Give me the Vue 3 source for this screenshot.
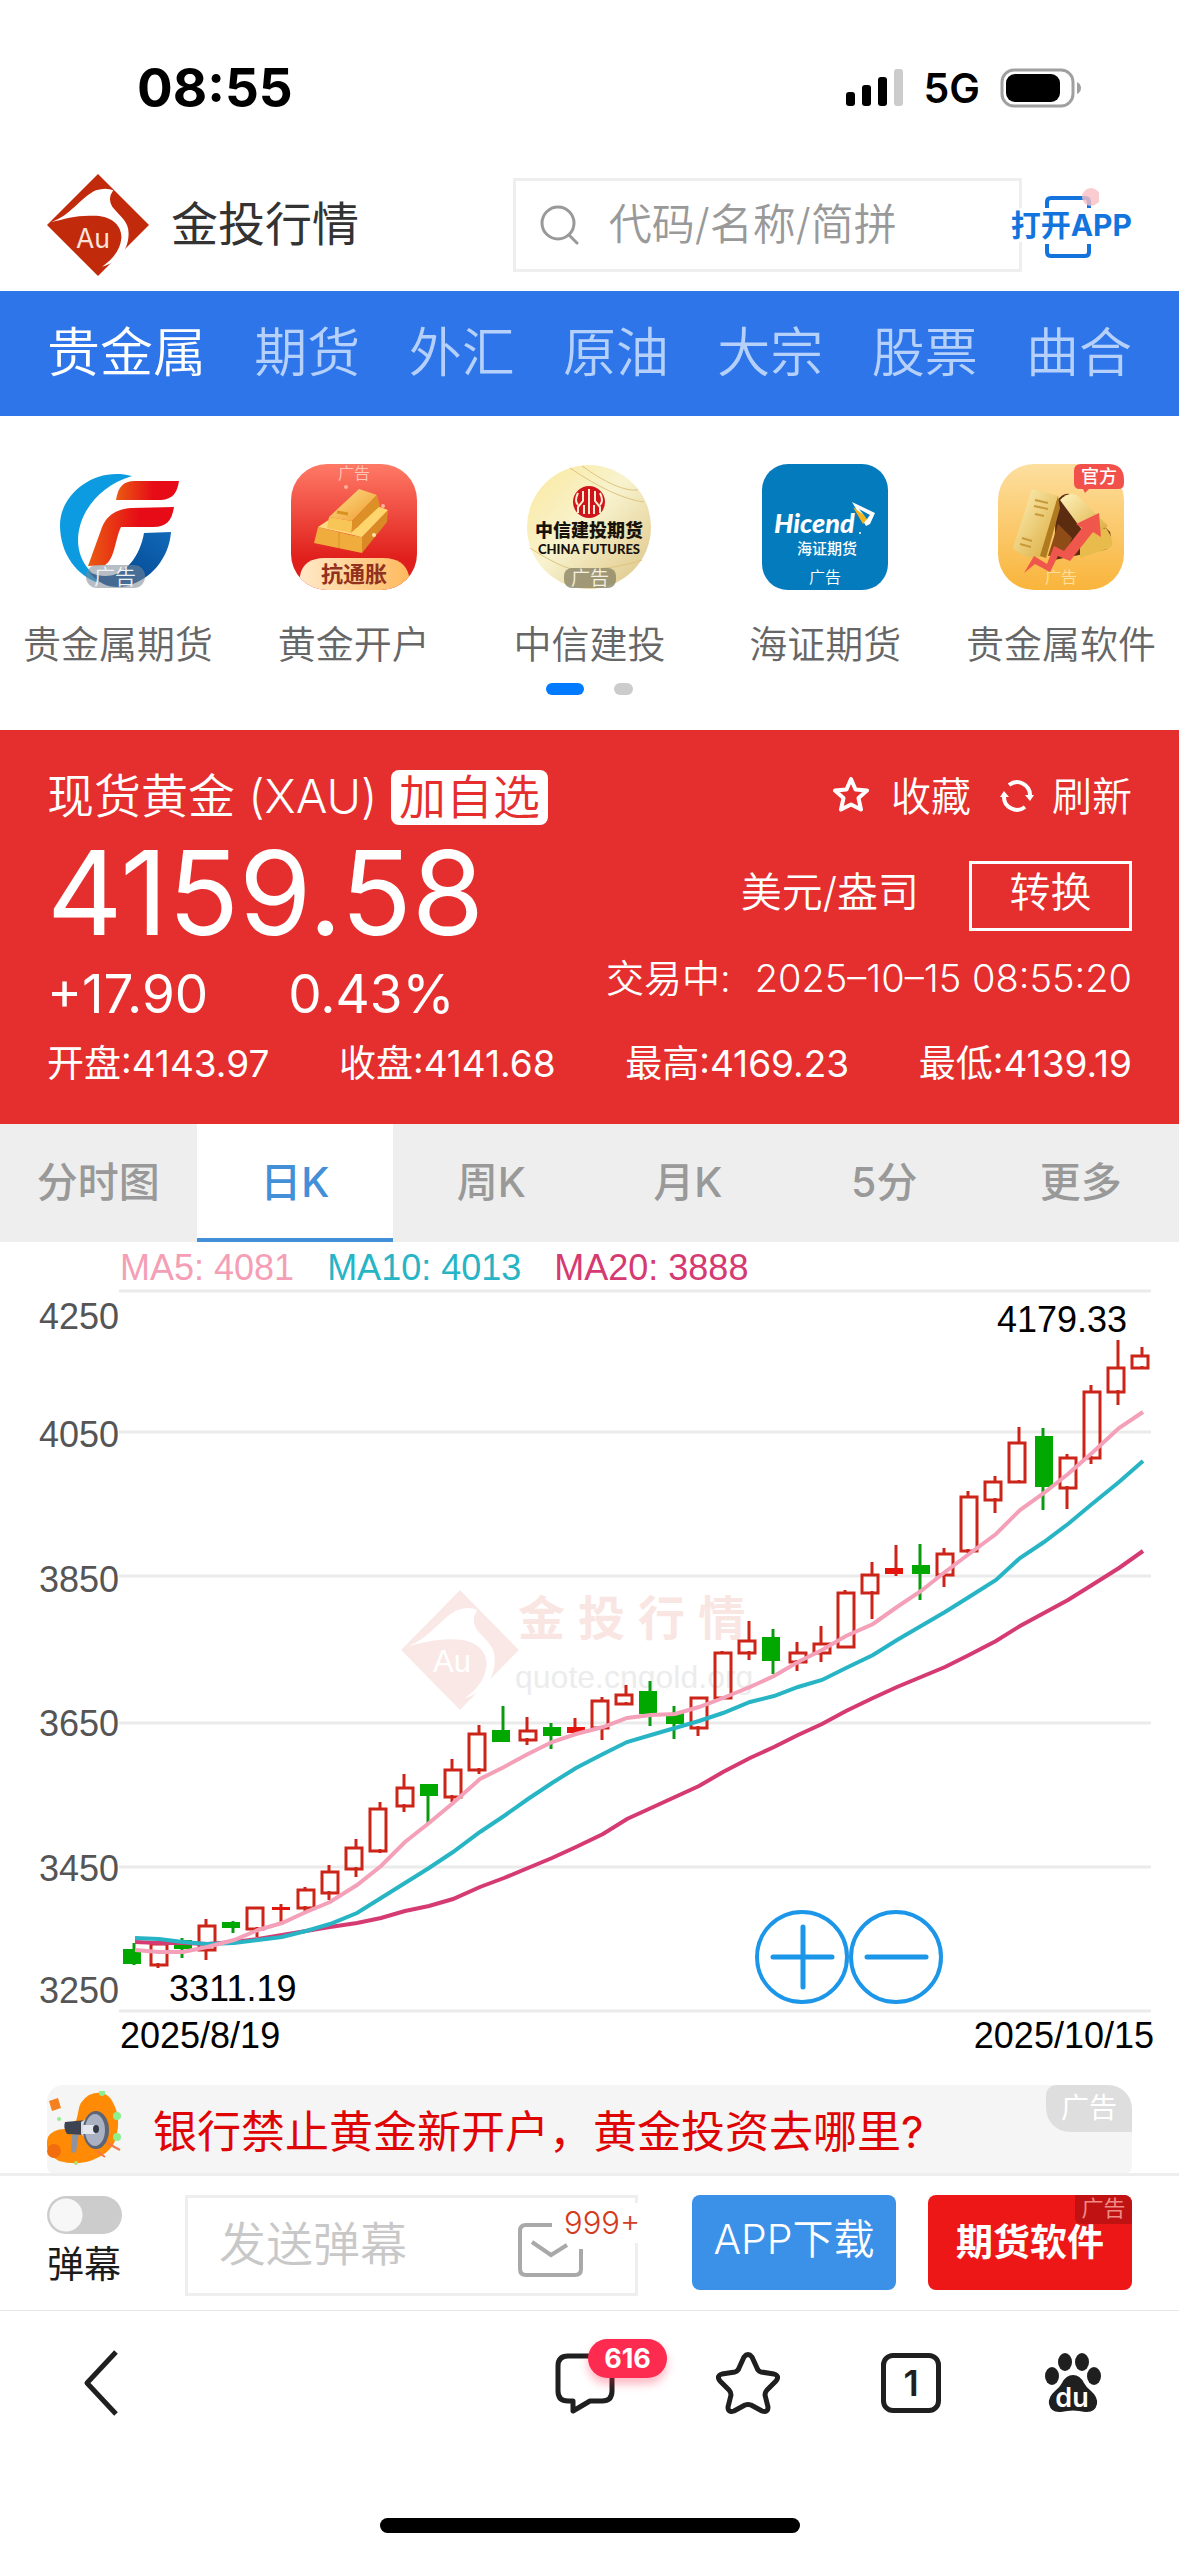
<script setup>
import { ref } from 'vue'

const navItems = ['贵金属', '期货', '外汇', '原油', '大宗', '股票', '曲合']
const periods = ['分时图', '日K', '周K', '月K', '5分', '更多']
const activePeriod = ref('日K')
const danmu = ref(false)

const stats = [
  { label: '开盘', value: '4143.97' },
  { label: '收盘', value: '4141.68' },
  { label: '最高', value: '4169.23' },
  { label: '最低', value: '4139.19' }
]

const legend = [
  { key: 'ma5', text: 'MA5: 4081' },
  { key: 'ma10', text: 'MA10: 4013' },
  { key: 'ma20', text: 'MA20: 3888' }
]

// y of each grid line, its label and the label's baseline
const grid = [
  { y: 1291, label: '4250', base: 1329 },
  { y: 1432, label: '4050', base: 1447 },
  { y: 1576, label: '3850', base: 1592 },
  { y: 1723, label: '3650', base: 1736 },
  { y: 1867, label: '3450', base: 1881 },
  { y: 2011, label: '3250', base: 2003 }
]

// body x, wick x, high, body top, body bottom, low, rising
const candles = [
  [123, 134, 1943, 1949, 1964, 1965, 0],
  [150, 158, 1943, 1943, 1964, 1968, 1],
  [174, 182, 1938, 1940, 1949, 1958, 0],
  [198, 206, 1919, 1925, 1949, 1960, 1],
  [222, 233, 1921, 1922, 1928, 1933, 0],
  [246, 257, 1907, 1907, 1928, 1937, 1],
  [272, 281, 1904, 1907, 1910, 1923, 1],
  [297, 305, 1887, 1889, 1907, 1914, 1],
  [321, 329, 1865, 1871, 1892, 1900, 1],
  [345, 356, 1839, 1847, 1868, 1877, 1],
  [369, 380, 1802, 1808, 1850, 1853, 1],
  [396, 404, 1774, 1787, 1805, 1812, 1],
  [420, 428, 1784, 1784, 1796, 1823, 0],
  [444, 452, 1759, 1769, 1796, 1802, 1],
  [468, 479, 1725, 1733, 1769, 1774, 1],
  [492, 503, 1706, 1730, 1742, 1742, 0],
  [519, 527, 1717, 1730, 1739, 1745, 1],
  [543, 551, 1723, 1727, 1736, 1749, 0],
  [567, 575, 1718, 1727, 1733, 1736, 1],
  [591, 602, 1697, 1700, 1727, 1740, 1],
  [615, 626, 1685, 1694, 1703, 1705, 1],
  [639, 650, 1681, 1691, 1714, 1726, 0],
  [666, 674, 1706, 1713, 1724, 1739, 0],
  [690, 698, 1697, 1697, 1727, 1736, 1],
  [714, 722, 1651, 1652, 1697, 1697, 1],
  [738, 749, 1621, 1640, 1652, 1660, 1],
  [762, 773, 1629, 1637, 1661, 1674, 0],
  [789, 797, 1642, 1652, 1661, 1671, 1],
  [813, 821, 1626, 1643, 1652, 1662, 1],
  [837, 845, 1590, 1592, 1646, 1646, 1],
  [861, 872, 1562, 1574, 1592, 1619, 1],
  [885, 896, 1545, 1568, 1574, 1576, 1],
  [912, 920, 1544, 1565, 1574, 1600, 0],
  [936, 944, 1548, 1553, 1574, 1587, 1],
  [960, 968, 1491, 1496, 1550, 1553, 1],
  [984, 995, 1476, 1481, 1499, 1513, 1],
  [1008, 1019, 1427, 1442, 1481, 1483, 1],
  [1035, 1043, 1428, 1436, 1487, 1510, 0],
  [1059, 1067, 1454, 1457, 1487, 1509, 1],
  [1083, 1091, 1385, 1391, 1457, 1464, 1],
  [1107, 1118, 1340, 1367, 1391, 1405, 1],
  [1131, 1142, 1347, 1355, 1367, 1369, 1]
].map(([x, wx, high, top, bottom, low, up]) => ({ x, wx, high, top, bottom, low, up: !!up }))

const averages = [
  {
    key: 'ma20',
    ys: [1942, 1943, 1943, 1944, 1942, 1939, 1935, 1931, 1927, 1923, 1918, 1911, 1906, 1899, 1887, 1878, 1868, 1858, 1847, 1834, 1819, 1808, 1797, 1786, 1772, 1758, 1747, 1735, 1724, 1711, 1698, 1687, 1677, 1667, 1655, 1641, 1626, 1613, 1600, 1585, 1568, 1551]
  },
  {
    key: 'ma10',
    ys: [1938, 1939, 1942, 1944, 1943, 1940, 1937, 1931, 1924, 1913, 1898, 1883, 1868, 1852, 1832, 1816, 1799, 1783, 1768, 1754, 1742, 1735, 1728, 1721, 1713, 1702, 1696, 1687, 1680, 1668, 1655, 1640, 1626, 1612, 1597, 1580, 1558, 1542, 1524, 1504, 1482, 1461]
  },
  {
    key: 'ma5',
    ys: [1950, 1952, 1952, 1947, 1940, 1930, 1923, 1912, 1902, 1885, 1866, 1842, 1823, 1803, 1779, 1767, 1754, 1742, 1734, 1727, 1718, 1715, 1714, 1707, 1698, 1687, 1676, 1662, 1650, 1636, 1624, 1607, 1591, 1572, 1554, 1534, 1510, 1493, 1474, 1453, 1428, 1412]
  }
].map(({ key, ys }) => ({ key, points: ys.map((y, i) => `${candles[i].wx + 1},${y}`).join(' ') }))
</script>

<template>
  <div class="page">
    <div class="status">
      <span class="clock">08:55</span>
      <div class="signals">
        <svg class="bars" width="58" height="38" viewBox="0 0 58 38" aria-hidden="true">
          <rect x="0" y="23" width="9" height="14" rx="3" />
          <rect x="16" y="16" width="9" height="21" rx="3" />
          <rect x="32" y="8" width="9" height="29" rx="3" />
          <rect x="48" y="0" width="9" height="37" rx="3" fill="#cccccc" />
        </svg>
        <span class="network">5G</span>
        <svg width="82" height="40" viewBox="0 0 82 40" aria-hidden="true">
          <rect x="2" y="2" width="71" height="36" rx="12" fill="none" stroke="#a0a0a0" stroke-width="3" />
          <rect x="6" y="6" width="54" height="28" rx="9" />
          <path d="M77 14 Q81 16 81 20 Q81 24 77 26 Z" fill="#a0a0a0" />
        </svg>
      </div>
    </div>

    <header class="top">
      <a class="brand" href="#">
        <svg width="102" height="102" viewBox="0 0 100 100" aria-hidden="true">
          <path d="M50 0 L100 50 L50 100 L0 50 Z" fill="#c12a0b" />
          <path d="M4 47 C22 42 34 22 48 16 Q58 13 65 16 Q59 24 64 32 C72 42 80 46 80 58 C80 75 70 86 54 91 C66 82 72 74 73 62 C73 48 60 41 46 41 C30 40 18 44 4 47 Z" fill="#fff" />
          <text x="45" y="73" text-anchor="middle" font-family="Inter, sans-serif" font-size="26" fill="#fbe3dc">Au</text>
        </svg>
        <span>金投行情</span>
      </a>
      <label class="search">
        <svg width="40" height="40" viewBox="0 0 40 40" fill="none" stroke="#999" stroke-width="3" aria-hidden="true">
          <circle cx="18" cy="18" r="16" />
          <path d="M29 30 L37 38" stroke-linecap="round" />
        </svg>
        <input type="search" placeholder="代码/名称/简拼" aria-label="代码/名称/简拼" />
      </label>
      <button class="open-app" type="button">
        <svg class="frame" width="62" height="74" viewBox="0 0 62 74" fill="none" aria-hidden="true">
          <path d="M10 22 V16 Q10 12 14 12 H48 Q52 12 52 16 V22" stroke="#1274dc" stroke-width="4" />
          <path d="M10 58 V66 Q10 70 14 70 H48 Q52 70 52 66 V58" stroke="#1274dc" stroke-width="4" />
          <circle cx="54" cy="11" r="9" fill="#f9bfc4" fill-opacity="0.8" />
        </svg>
        <span>打开APP</span>
      </button>
    </header>

    <nav class="categories">
      <a v-for="(item, i) in navItems" :key="item" href="#" :class="{ current: i === 0 }">{{ item }}</a>
    </nav>

    <section class="shortcuts">
      <div class="tiles">
        <a class="tile" href="#">
          <svg width="126" height="126" viewBox="0 0 126 126" aria-hidden="true">
            <defs>
              <linearGradient id="orangeRed"><stop offset="0" stop-color="#ea5b12" /><stop offset="0.6" stop-color="#e60b17" /></linearGradient>
              <linearGradient id="deepBlue" x1="0" y1="1" x2="1" y2="0"><stop offset="0" stop-color="#003f87" /><stop offset="1" stop-color="#1169b8" /></linearGradient>
            </defs>
            <path d="M77 12 C40 2 5 30 5 61 C5 90 22 112 44 119 L36 108 C8 80 27 27 77 12 Z" fill="#0c9be0" />
            <path d="M61 36 C63 23 68 17 80 17 H124 C122 29 118 35 106 36 Z" fill="url(#orangeRed)" />
            <path d="M119 43 L76 44 C56 46 50 55 46 66 L33 102 L50 101 C60 95 60 75 66 63 H98 C112 63 117 56 119 43 Z" fill="url(#orangeRed)" />
            <path d="M89 69 L116 68 C114 95 95 116 72 122 C58 125 45 122 34 108 C62 122 84 98 89 69 Z" fill="url(#deepBlue)" />
            <rect x="31" y="101" width="59" height="23" rx="11" fill="#7b8794" fill-opacity="0.55" />
            <text x="60" y="120" text-anchor="middle" font-size="21" fill="#eef2f5">广告</text>
          </svg>
          <span>贵金属期货</span>
        </a>
        <a class="tile" href="#">
          <svg width="126" height="126" viewBox="0 0 126 126" aria-hidden="true">
            <defs>
              <linearGradient id="redTile" x2="0" y2="1"><stop offset="0" stop-color="#ff7a66" /><stop offset="0.75" stop-color="#e01f1c" /></linearGradient>
              <linearGradient id="sand" x2="1"><stop offset="0" stop-color="#ffe9c8" /><stop offset="1" stop-color="#ffb95e" /></linearGradient>
              <linearGradient id="bar" x2="1" y2="1"><stop offset="0" stop-color="#ffe08a" /><stop offset="1" stop-color="#ee9a2e" /></linearGradient>
              <clipPath id="round"><rect width="126" height="126" rx="36" /></clipPath>
            </defs>
            <g clip-path="url(#round)">
              <rect width="126" height="126" fill="url(#redTile)" />
              <text x="63" y="15" text-anchor="middle" font-size="16" fill="#ffc4b8">广告</text>
              <path d="M27 63 L60 71 L71 73 V89 L23 79 Z" fill="#f0ad3e" />
              <path d="M27 63 L39 55 L62 58 L71 73 Z" fill="#ffdc80" />
              <path d="M71 73 L97 46 L96 58 L71 89 Z" fill="#d98a24" />
              <path d="M71 73 L97 46 L86 42 L60 70 Z" fill="#ffd66e" />
              <path d="M48 68 V84" stroke="#d9902c" stroke-width="1" />
              <path d="M38 53 L68 25 L86 31 L61 57 Z" fill="url(#bar)" />
              <path d="M61 57 L86 31 L89 42 L60 69 Z" fill="#dc9026" />
              <path d="M38 53 L61 57 L60 69 L36 64 Z" fill="#f8c557" />
              <path d="M46 48 L57 50" stroke="#d79220" stroke-width="3" />
              <circle cx="55" cy="23" r="2" fill="#ffb199" /><circle cx="92" cy="42" r="2" fill="#ffb199" /><circle cx="83" cy="71" r="2" fill="#ffe2a8" />
              <path d="M9 126 V112 Q12 94 34 94 H92 Q114 94 118 112 V126 Z" fill="url(#sand)" />
              <text x="63" y="118" text-anchor="middle" font-size="22" font-weight="600" fill="#92311d">抗通胀</text>
            </g>
          </svg>
          <span>黄金开户</span>
        </a>
        <a class="tile" href="#">
          <svg width="126" height="126" viewBox="0 0 126 126" aria-hidden="true">
            <defs>
              <linearGradient id="cream" x2="1" y2="1"><stop offset="0" stop-color="#fbe89b" /><stop offset="0.45" stop-color="#f8f3cf" /><stop offset="1" stop-color="#dcc382" /></linearGradient>
            </defs>
            <circle cx="63" cy="63" r="62" fill="url(#cream)" />
            <path d="M44 4 Q88 34 118 38 M56 2 Q92 28 112 26 M4 84 Q44 110 60 106 Q92 104 116 96" fill="none" stroke="#dfc57f" stroke-width="1" />
            <circle cx="63" cy="38" r="16" fill="#d0141c" />
            <path d="M63 25 V50 M57 27 V37 L52 43 V49 M69 27 V37 L74 43 V49 M58 50 V41 M68 50 V41 M52 29 Q48 37 52 41 M74 29 Q78 37 74 41" fill="none" stroke="#f9efd0" stroke-width="2" />
            <text x="63" y="73" text-anchor="middle" font-size="18" font-weight="900" fill="#17120b">中信建投期货</text>
            <text x="63" y="90" text-anchor="middle" font-family="Lato, sans-serif" font-size="13" font-weight="900" fill="#17120b">CHINA FUTURES</text>
            <rect x="38" y="104" width="52" height="20" rx="8" fill="#8d8769" fill-opacity="0.8" />
            <text x="64" y="121" text-anchor="middle" font-size="19" fill="#f4f1e2">广告</text>
          </svg>
          <span>中信建投</span>
        </a>
        <a class="tile" href="#">
          <svg width="126" height="126" viewBox="0 0 126 126" aria-hidden="true">
            <rect width="126" height="126" rx="26" fill="#047bbc" />
            <text x="12" y="69" font-family="Lato, sans-serif" font-size="27" font-weight="900" font-style="italic" fill="#fff">Hicend</text>
            <path d="M90 38 L113 49 L108 60 L104 62 Z" fill="#fff" />
            <path d="M91 43 L106 54 L101 60 Z" fill="#f3b51f" />
            <path d="M97 45 L108 51 L105 55 Z" fill="#047bbc" />
            <circle cx="98" cy="69" r="1" fill="#fff" />
            <text x="65" y="90" text-anchor="middle" font-size="15" font-weight="500" fill="#fff">海证期货</text>
            <text x="63" y="119" text-anchor="middle" font-size="16" fill="#fff">广告</text>
          </svg>
          <span>海证期货</span>
        </a>
        <a class="tile" href="#">
          <svg width="126" height="126" viewBox="0 0 126 126" aria-hidden="true">
            <defs>
              <linearGradient id="amber" x2="0" y2="1"><stop offset="0" stop-color="#fddf9f" /><stop offset="1" stop-color="#f9b43b" /></linearGradient>
              <linearGradient id="gold" x2="1" y2="1"><stop offset="0" stop-color="#fff3bd" /><stop offset="1" stop-color="#d9a736" /></linearGradient>
            </defs>
            <rect width="126" height="126" rx="36" fill="url(#amber)" />
            <path d="M58 38 Q68 24 78 34 L112 68 Q116 84 106 86 L56 96 Z" fill="#5c2c10" />
            <path d="M62 36 Q72 26 80 32 L110 62 L90 74 Z" fill="url(#gold)" />
            <path d="M60 60 L74 74 L68 90 L50 92 Z" fill="#8f4c17" />
            <path d="M82 72 L108 64 Q118 78 112 84 L82 94 Z" fill="#e7bb4c" />
            <path d="M34 25 L60 32 L44 92 Q30 98 15 84 Z" fill="url(#gold)" />
            <path d="M60 32 L62 44 L48 94 L42 92 Z" fill="#b07a20" />
            <path d="M37 36 L50 39 M36 42 L50 45 M37 50 L46 52 M24 74 L34 77 M22 80 L33 83" stroke="#c99a3a" stroke-width="2" />
            <path d="M26 109 L36 92 L49 100 L56 82 L66 87 L84 64 L78 60 L101 49 L103 73 L95 68 L72 97 L60 92 L52 108 L37 100 Z" fill="#f0574c" />
            <path d="M83 0 H110 Q126 0 126 16 V19 Q126 25 120 25 H91 L87 29 L85 25 H82 Q76 25 76 19 V7 Q76 0 83 0 Z" fill="#f2504a" />
            <text x="101" y="19" text-anchor="middle" font-size="18" font-weight="500" fill="#fff">官方</text>
            <text x="63" y="119" text-anchor="middle" font-size="16" fill="#fde0a0">广告</text>
          </svg>
          <span>贵金属软件</span>
        </a>
      </div>
      <div class="pager"><i class="on"></i><i></i></div>
    </section>

    <section class="quote">
      <div class="line head">
        <h1>现货黄金 (XAU)</h1>
        <button class="watch" type="button">加自选</button>
        <button class="action" type="button">
          <svg width="40" height="40" viewBox="0 0 40 40" fill="none" stroke="#fff" stroke-width="4" stroke-linejoin="round" aria-hidden="true">
            <path d="M20 2 L24.500 12.500 L36 13.500 L27.500 21 L30 32.500 L20 27.500 L10 32.500 L12.500 21 L4 13.500 L15.500 12.500 Z" />
          </svg>
          收藏
        </button>
        <button class="action refresh" type="button">
          <svg width="36" height="36" viewBox="0 1 36 36" fill="none" stroke="#fff" stroke-width="4" aria-hidden="true">
            <path d="M10 7 A13 13 0 0 1 31 18" />
            <path d="M26 29 A13 13 0 0 1 5 18" />
            <path d="M26 17 H35 L31 23 Z M1 19 H10 L5 13 Z" fill="#fff" stroke="none" />
          </svg>
          刷新
        </button>
      </div>
      <div class="body">
        <div class="figures">
          <strong class="price">4159.58</strong>
          <div class="change"><span>+17.90</span><span>0.43%</span></div>
        </div>
        <div class="side">
          <div class="unit"><span>美元/盎司</span><button class="convert" type="button">转换</button></div>
          <div class="time"><span>交易中:</span><time>2025–10–15 08:55:20</time></div>
        </div>
      </div>
      <div class="line stats">
        <span v-for="s in stats" :key="s.label">{{ s.label }}:{{ s.value }}</span>
      </div>
    </section>

    <div class="periods">
      <button v-for="p in periods" :key="p" type="button" :class="{ active: p === activePeriod }" @click="activePeriod = p">{{ p }}</button>
    </div>

    <section class="chart">
      <div class="legend"><span v-for="l in legend" :key="l.key" :class="l.key">{{ l.text }}</span></div>
      <svg class="plot" viewBox="0 1288 1179 772" role="img" aria-label="日K">
        <g class="watermark">
          <g transform="translate(402 1591) scale(1.160 1.180)">
            <path d="M50 0 L100 50 L50 100 L0 50 Z" fill="#f9e8e5" stroke="#f9e8e5" stroke-linejoin="round" />
            <path d="M4 47 C22 42 34 22 48 16 Q58 13 65 16 Q59 24 64 32 C72 42 80 46 80 58 C80 75 70 86 54 91 C66 82 72 74 73 62 C73 48 60 41 46 41 C30 40 18 44 4 47 Z" fill="#fff" />
          </g>
          <text x="452" y="1672" text-anchor="middle" font-size="31" fill="#fff">Au</text>
          <text class="mark" x="518" y="1635" font-size="47" fill="#f9e6e2">金 投 行 情</text>
          <text x="515" y="1688" font-size="32" fill="#ececec">quote.cngold.org</text>
        </g>
        <g v-for="g in grid" :key="g.label">
          <path :d="`M119 ${g.y} H1151`" stroke="#ebebeb" stroke-width="3" />
          <text class="axis" x="119" :y="g.base" text-anchor="end">{{ g.label }}</text>
        </g>
        <g v-for="c in candles" :key="c.x">
          <path v-if="c.high < c.top" :d="`M${c.wx} ${c.high} V${c.top + 1}`" :class="c.up ? 'up' : 'down'" />
          <path v-if="c.low > c.bottom" :d="`M${c.wx} ${c.bottom - 1} V${c.low}`" :class="c.up ? 'up' : 'down'" />
          <rect v-if="c.up && c.bottom - c.top > 7" :x="c.x + 1" :y="c.top + 1" width="16" :height="c.bottom - c.top" class="up" />
          <rect v-else :x="c.x" :y="c.top" width="18" :height="c.bottom - c.top" :class="c.up ? 'solid-up' : 'solid-down'" />
        </g>
        <polyline v-for="a in averages" :key="a.key" :points="a.points" :class="a.key" />
        <text class="value" x="997" y="1332">4179.33</text>
        <text class="value" x="169" y="2001">3311.19</text>
        <text class="value" x="120" y="2048">2025/8/19</text>
        <text class="value" x="1154" y="2048" text-anchor="end">2025/10/15</text>
      </svg>
      <div class="zoom">
        <button type="button" aria-label="+">
          <svg width="94" height="96" viewBox="0 0 94 96" fill="none" stroke="#1c96e8" stroke-width="5" stroke-linecap="round"><circle cx="47" cy="48" r="45" stroke-width="4" /><path d="M18 48 H77 M48 18 V78" /></svg>
        </button>
        <button type="button" aria-label="-">
          <svg width="94" height="96" viewBox="0 0 94 96" fill="none" stroke="#1c96e8" stroke-width="5" stroke-linecap="round"><circle cx="47" cy="48" r="45" stroke-width="4" /><path d="M18 48 H77" /></svg>
        </button>
      </div>
    </section>

    <a class="notice" href="#">
      <svg width="74" height="76" viewBox="0 0 74 76" aria-hidden="true">
        <path d="M42 4 Q56 -2 64 8 Q74 24 70 42 Q68 58 52 66 Q34 76 12 70 Q-4 62 1 46 Q6 38 18 38 Q30 34 31 22 Q32 10 42 4 Z" fill="#ff8a05" />
        <circle cx="7" cy="60" r="7" fill="#f26d0d" />
        <path d="M2 10 L11 7 L14 17 L5 20 Z" fill="#f4801f" />
        <circle cx="55" cy="2" r="3" fill="#8df08e" /><circle cx="70" cy="25" r="4" fill="#8df08e" /><circle cx="12" cy="28" r="2" fill="#8df08e" /><circle cx="70" cy="46" r="4" fill="#8df08e" /><circle cx="29" cy="72" r="2" fill="#b7e06b" />
        <path d="M60 52 L73 59 M50 60 L58 66" stroke="#f2774a" stroke-width="2" />
        <path d="M25 44 L32 42 L29 61 L24 62 Z" fill="#8c93a3" />
        <path d="M18 31 L40 29 V44 L20 43 Q16 37 18 31 Z" fill="#3d4350" />
        <path d="M34 31 L48 22 V56 L34 43 Z" fill="#d7dbe3" />
        <ellipse cx="49" cy="39" rx="13" ry="19" fill="#5c6475" />
        <ellipse cx="48" cy="39" rx="10" ry="16" fill="#aab1c2" />
        <path d="M36 34 H48 V43 H36 Z" fill="#e4e7ee" />
        <ellipse cx="49" cy="38" rx="3" ry="4" fill="#343a48" />
      </svg>
      <span class="notice-text">银行禁止黄金新开户，黄金投资去哪里?</span>
      <span class="tag">广告</span>
    </a>

    <div class="composer">
      <label class="switch">
        <input v-model="danmu" type="checkbox" />
        <span>弹幕</span>
      </label>
      <div class="message">
        <input type="text" placeholder="发送弹幕" aria-label="发送弹幕" />
        <button class="inbox" type="button">
          <svg width="66" height="54" viewBox="0 0 66 54" fill="none" stroke="#a9a9a9" stroke-width="4" aria-hidden="true">
            <path d="M34 2 H8 Q2 2 2 8 V46 Q2 52 8 52 H57 Q63 52 63 46 V26" />
            <path d="M14 19 L33 32 L49 22" />
          </svg>
          <span>999+</span>
        </button>
      </div>
      <a class="cta download" href="#">APP下载</a>
      <a class="cta promo" href="#">期货软件<small>广告</small></a>
    </div>

    <nav class="browser">
      <button class="back" type="button" aria-label="返回">
        <svg width="36" height="66" viewBox="0 0 36 66" fill="none" stroke="#1f1f1f" stroke-width="5"><path d="M33 2 L4 33 L33 64" stroke-linejoin="round" /></svg>
      </button>
      <button class="chat" type="button" aria-label="消息">
        <svg width="60" height="64" viewBox="0 0 60 64" fill="none" stroke="#1f1f1f" stroke-width="5" stroke-linejoin="round"><path d="M13 5 H47 Q57 5 57 15 V40 Q57 50 47 50 H35 L18 60 V50 H13 Q3 50 3 40 V15 Q3 5 13 5 Z" /></svg>
        <span class="badge">616</span>
      </button>
      <button type="button" aria-label="收藏">
        <svg width="64" height="64" viewBox="1 0 64 64" fill="none" stroke="#1f1f1f" stroke-width="5" stroke-linejoin="round"><path d="M29 6 Q33 1 37 6 L42 17 Q43 20 46 21 L59 23 Q65 25 61 30 L52 39 Q50 41 50 44 L53 56 Q53 62 47 60 L36 54 Q33 53 30 54 L19 60 Q13 62 13 56 L16 44 Q16 41 14 39 L5 30 Q1 25 7 23 L20 21 Q23 20 24 17 Z" /></svg>
      </button>
      <button class="pages" type="button">1</button>
      <button type="button" aria-label="百度">
        <svg width="60" height="62" viewBox="-3 0 60 62" fill="#1f1f1f">
          <ellipse cx="20" cy="10" rx="7" ry="9" /><ellipse cx="37" cy="10" rx="7" ry="9" /><ellipse cx="7" cy="24" rx="7" ry="9" /><ellipse cx="49" cy="24" rx="7" ry="9" />
          <path d="M28 23 Q35 23 39 31 Q41 35 46 39 Q53 45 52 52 Q50 61 40 60 Q28 57 16 60 Q6 61 4 52 Q3 45 10 39 Q15 35 17 31 Q21 23 28 23 Z" />
          <text x="27" y="55" text-anchor="middle" font-family="Inter, sans-serif" font-size="27" font-weight="600" fill="#fff">du</text>
        </svg>
      </button>
    </nav>
    <div class="home"></div>
  </div>
</template>

<style>
body {
  margin: 0;
  background: #fff;
}
</style>

<style scoped>
.page {
  font-family: Inter, 'Noto Sans CJK SC', sans-serif;
  font-size: 37px;
  color: #333;
  background: #fff;
  overflow: hidden;
}
.page * {
  box-sizing: border-box;
}
a {
  color: inherit;
  text-decoration: none;
}
button {
  padding: 0;
  border: 0;
  background: none;
  color: inherit;
  font: inherit;
}
svg {
  display: block;
  flex: none;
}
input {
  font: inherit;
}

.status {
  display: flex;
  align-items: center;
  justify-content: space-between;
  height: 176px;
  padding: 0 97px 0 137px;
  color: #000;
}
.clock {
  font-size: 53px;
  font-weight: 700;
}
.signals {
  display: flex;
  align-items: center;
  gap: 20px;
}
.network {
  font-size: 41px;
  font-weight: 600;
}

.top {
  display: flex;
  align-items: center;
  height: 112px;
  padding: 0 47px;
  margin-bottom: 3px;
  padding-bottom: 14px;
}
.brand {
  display: flex;
  align-items: center;
  gap: 22px;
  margin-right: auto;
  font-size: 47px;
}
.brand span {
  padding-bottom: 10px;
}
.search {
  display: flex;
  align-items: center;
  gap: 29px;
  flex: 0 1 509px;
  height: 94px;
  padding: 0 24px;
  border: 3px solid #eee;
}
.search input {
  flex: 1;
  width: 100%;
  min-width: 0;
  padding: 0 0 2px;
  border: 0;
  outline: 0;
  background: none;
  font-size: 43px;
  font-weight: 350;
}
.search input::placeholder {
  color: #999;
}
.open-app {
  position: relative;
  display: flex;
  justify-content: center;
  align-items: center;
  height: 74px;
  margin-left: -11px;
  color: #1274dc;
  font-size: 30px;
  font-weight: 700;
  line-height: 34px;
}
.open-app span {
  position: relative;
  background: #fff;
}
.frame {
  position: absolute;
  top: -2px;
  left: 26px;
}

.categories {
  display: flex;
  justify-content: space-between;
  align-items: center;
  height: 125px;
  padding: 0 47px 9px;
  background: #2d75e9;
  color: #b5d1fb;
  font-size: 53px;
  font-weight: 350;
  white-space: nowrap;
}
.categories .current {
  color: #fff;
}

.shortcuts {
  padding: 48px 0 35px;
}
.tiles {
  display: grid;
  grid-template-columns: repeat(5, 1fr);
}
.tile {
  display: flex;
  flex-direction: column;
  align-items: center;
  gap: 29px;
  color: #666;
  font-size: 38px;
  line-height: 50px;
  font-weight: 350;
}
.pager {
  display: flex;
  justify-content: center;
  gap: 30px;
  margin-top: 14px;
}
.pager i {
  width: 19px;
  height: 12px;
  border-radius: 6px;
  background: #ccc;
}
.pager .on {
  width: 38px;
  background: #007bff;
}

.quote {
  padding: 38px 47px 35px;
  background: #e52e2e;
  color: #fff;
  font-weight: 350;
}
.line {
  display: flex;
  align-items: center;
  white-space: nowrap;
}
.head {
  height: 58px;
}
h1 {
  margin: 0 auto 0 0;
  padding-bottom: 10px;
  font-size: 47px;
  font-weight: 350;
}
.watch {
  height: 55px;
  margin-right: 283px;
  padding: 0 8px;
  border-radius: 8px;
  background: #fff;
  color: #e52e2e;
  font-size: 47px;
  line-height: 48px;
}
.action {
  display: flex;
  align-items: center;
  gap: 20px;
  font-size: 40px;
  line-height: 56px;
}
.refresh {
  margin-left: 28px;
  gap: 17px;
}
.body {
  display: flex;
  justify-content: space-between;
  margin-top: 10px;
}
.price {
  display: block;
  font-size: 117px;
  font-weight: 400;
  line-height: 114px;
}
.change {
  display: flex;
  gap: 80px;
  margin-top: 14px;
  font-size: 53px;
  font-weight: 400;
  line-height: 60px;
}
.side {
  display: flex;
  flex-direction: column;
  align-items: flex-end;
  gap: 22px;
  padding-top: 25px;
}
.unit {
  display: flex;
  align-items: center;
  gap: 50px;
  font-size: 41px;
}
.unit span {
  padding-bottom: 8px;
  line-height: 60px;
}
.convert {
  width: 163px;
  height: 70px;
  padding-bottom: 8px;
  border: 3px solid #fff;
  line-height: 56px;
}
.time {
  display: flex;
  gap: 24px;
  font-size: 38px;
  line-height: 50px;
}
.stats {
  justify-content: space-between;
  margin-top: 15px;
  font-weight: 400;
  line-height: 50px;
}

.periods {
  display: grid;
  grid-template-columns: repeat(6, 1fr);
  background: #eee;
}
.periods button {
  height: 118px;
  padding-bottom: 5px;
  border-bottom: 4px solid transparent;
  color: #999;
  font-size: 41px;
  font-weight: 500;
}
.periods .active {
  border-color: #438fd8;
  background: #fff;
  color: #438fd8;
}

.chart {
  position: relative;
  font-family: 'Liberation Sans', 'Noto Sans CJK SC', sans-serif;
  font-size: 36px;
}
.legend {
  display: flex;
  gap: 33px;
  height: 46px;
  padding: 5px 0 0 120px;
  line-height: 42px;
}
.legend .ma5 {
  color: #f49fb6;
}
.legend .ma10 {
  color: #27b5c5;
}
.legend .ma20 {
  color: #d63a72;
}
.plot {
  width: 100%;
  height: auto;
}
.mark {
  font-weight: 700;
}
.axis {
  fill: #555;
}
.value {
  fill: #000;
}
.up {
  fill: none;
  stroke: #cc2418;
  stroke-width: 3;
}
.down {
  fill: none;
  stroke: #0a9a12;
  stroke-width: 3;
}
.solid-up {
  fill: #e4140c;
}
.solid-down {
  fill: #00a800;
}
polyline {
  fill: none;
  stroke-width: 4;
}
polyline.ma5 {
  stroke: #f4a0b8;
}
polyline.ma10 {
  stroke: #27b5c5;
}
polyline.ma20 {
  stroke: #d63a72;
}
.zoom {
  position: absolute;
  left: 64%;
  bottom: 55px;
  display: flex;
}

.notice {
  position: relative;
  display: flex;
  align-items: center;
  gap: 32px;
  height: 88px;
  margin: 25px 47px 0;
  background: #f5f5f5;
  border-radius: 16px 24px 6px 6px;
}
.notice-text {
  color: #e00505;
  font-size: 44px;
  white-space: nowrap;
}
.tag {
  position: absolute;
  top: 0;
  right: 0;
  width: 86px;
  height: 47px;
  border-radius: 10px 24px 0 24px;
  background: #dedede;
  color: #fff;
  font-size: 28px;
  line-height: 46px;
  text-align: center;
}

.composer {
  display: flex;
  align-items: flex-start;
  padding: 19px 47px 14px;
  border-top: 3px solid #eee;
  border-bottom: 1px solid #e8e8e8;
}
.switch {
  display: flex;
  flex-direction: column;
  gap: 6px;
  margin-right: 63px;
  color: #1c1c1c;
  line-height: 50px;
}
.switch input {
  appearance: none;
  width: 75px;
  height: 38px;
  margin: 1px 0 0;
  border-radius: 19px;
  background: radial-gradient(circle at 19px 19px, #f7f7f7 16px, #ccc 17px);
}
.switch input:checked {
  background: radial-gradient(circle at 56px 19px, #f7f7f7 16px, #438fd8 17px);
}
.message {
  position: relative;
  flex: 1;
  height: 101px;
  border: 3px solid #eee;
}
.message input {
  width: 100%;
  height: 95px;
  padding: 0 120px 4px 31px;
  border: 0;
  outline: 0;
  background: none;
  font-size: 47px;
  font-weight: 350;
}
.message input::placeholder {
  color: #c8c8c8;
}
.inbox {
  position: absolute;
  top: 25px;
  right: 51px;
}
.inbox span {
  position: absolute;
  top: -20px;
  left: 34px;
  padding: 0 0 0 12px;
  background: #fff;
  color: #d43a1c;
  font-size: 31px;
  font-weight: 300;
  line-height: 40px;
}
.cta {
  position: relative;
  flex: none;
  width: 204px;
  height: 95px;
  border-radius: 8px;
  overflow: hidden;
  color: #fff;
  text-align: center;
  white-space: nowrap;
}
.download {
  margin: 0 32px 0 54px;
  background: #3b91e8;
  font-size: 41px;
  font-weight: 350;
  line-height: 89px;
}
.promo {
  background: #ed1718;
  font-size: 37px;
  font-weight: 700;
  line-height: 96px;
}
.promo small {
  position: absolute;
  top: 0;
  right: 0;
  width: 57px;
  height: 29px;
  border-radius: 0 0 0 6px;
  background: #c01213;
  color: #f08a86;
  font-size: 22px;
  font-weight: 400;
  line-height: 27px;
}

.browser {
  display: flex;
  align-items: center;
  height: 144px;
  padding: 0 77px 0 83px;
  gap: 101px;
}
.back {
  margin-right: auto;
}
.chat {
  position: relative;
}
.badge {
  position: absolute;
  top: -12px;
  left: 33px;
  width: 79px;
  border-radius: 20px;
  background: #fd2b4f;
  box-shadow: 0 6px 10px #fd2b4f55;
  color: #fff;
  font-size: 27px;
  font-weight: 700;
  line-height: 39px;
}
.pages {
  width: 60px;
  height: 60px;
  border: 5px solid #1f1f1f;
  border-radius: 12px;
  color: #1f1f1f;
  font-size: 36px;
  font-weight: 600;
  line-height: 48px;
}
.home {
  width: 420px;
  height: 15px;
  margin: 63px auto 24px;
  border-radius: 8px;
  background: #000;
}
</style>
